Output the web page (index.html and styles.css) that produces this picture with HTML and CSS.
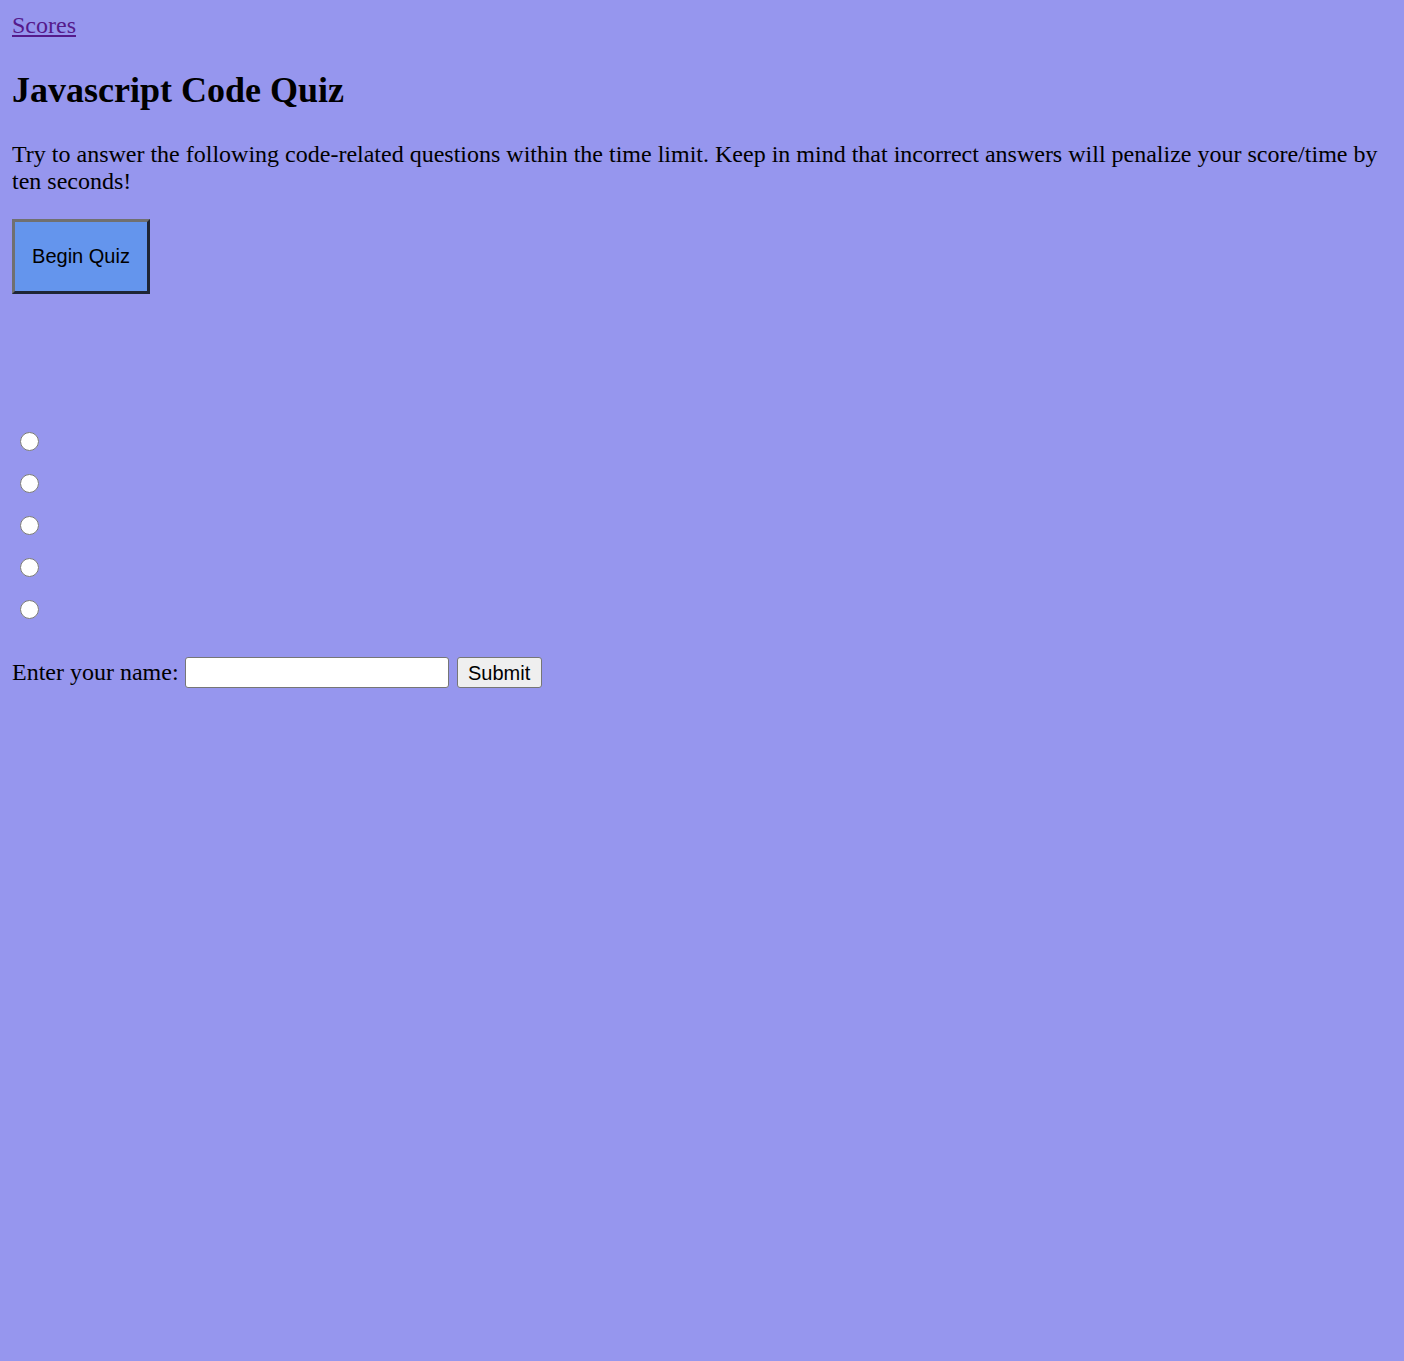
FILE: index.html
```html
<!DOCTYPE html>
<html lang="en">
<head>
<meta charset="utf-8">
<title>Javascript Code Quiz</title>
<link rel="stylesheet" href="styles.css">
</head>
<body>
<nav class="topnav"><a class="scores-link" href="#scores">Scores</a></nav>
<h2 class="title">Javascript Code Quiz</h2>
<p class="intro">Try to answer the following code-related questions within the time limit. Keep in mind that incorrect answers will penalize your score/time by ten seconds!</p>
<button class="begin-btn" type="button">Begin Quiz</button>
<div class="choices">
  <label class="choice"><input class="radio" type="radio" name="answer"></label>
  <label class="choice"><input class="radio" type="radio" name="answer"></label>
  <label class="choice"><input class="radio" type="radio" name="answer"></label>
  <label class="choice"><input class="radio" type="radio" name="answer"></label>
  <label class="choice"><input class="radio" type="radio" name="answer"></label>
</div>
<form class="name-form">
  <label class="name-label" for="name">Enter your name:</label>
  <input class="name-input" id="name" type="text">
  <button class="submit-btn" type="button">Submit</button>
</form>
</body>
</html>
```
FILE: styles.css
```css
html {
  background: #9696ee;
}
body {
  margin: 12px;
  font-family: "Liberation Serif", "Times New Roman", serif;
  font-size: 24px;
  color: #000;
  background: #9696ee;
}
.topnav {
  display: block;
}
.scores-link {
  color: #551a8b;
  text-decoration: underline;
}
.title {
  font-size: 36px;
  font-weight: bold;
  margin: 30px 0;
}
.intro {
  margin: 24px 0;
}
.begin-btn {
  display: block;
  font-family: "Liberation Sans", Arial, sans-serif;
  font-size: 20px;
  color: #000;
  background: #6495ed;
  border: 3px solid;
  border-color: #707070 #1e2535 #1e2535 #707070;
  padding: 0;
  width: 138px;
  height: 75px;
  margin: 0;
}
.choices {
  display: flex;
  flex-direction: column;
  margin-top: 126px;
}
.choice {
  display: flex;
  align-items: center;
  height: 42px;
}
.radio {
  width: 19px;
  height: 19px;
  margin: 0 0 0 8px;
}
.name-form {
  display: flex;
  align-items: center;
  margin-top: 27px;
}
.name-input {
  box-sizing: border-box;
  width: 264px;
  height: 31px;
  margin: 0 0 0 6px;
  border: 1.5px solid #767676;
  border-radius: 3px;
  background: #fff;
  font-size: 20px;
  padding: 2px 3px;
}
.submit-btn {
  box-sizing: border-box;
  width: 85px;
  height: 31px;
  margin: 0 0 0 8px;
  padding: 1px 0 0;
  font-family: "Liberation Sans", Arial, sans-serif;
  font-size: 20px;
  color: #000;
  background: #efefef;
  border: 1.5px solid #767676;
  border-radius: 3px;
}
```
